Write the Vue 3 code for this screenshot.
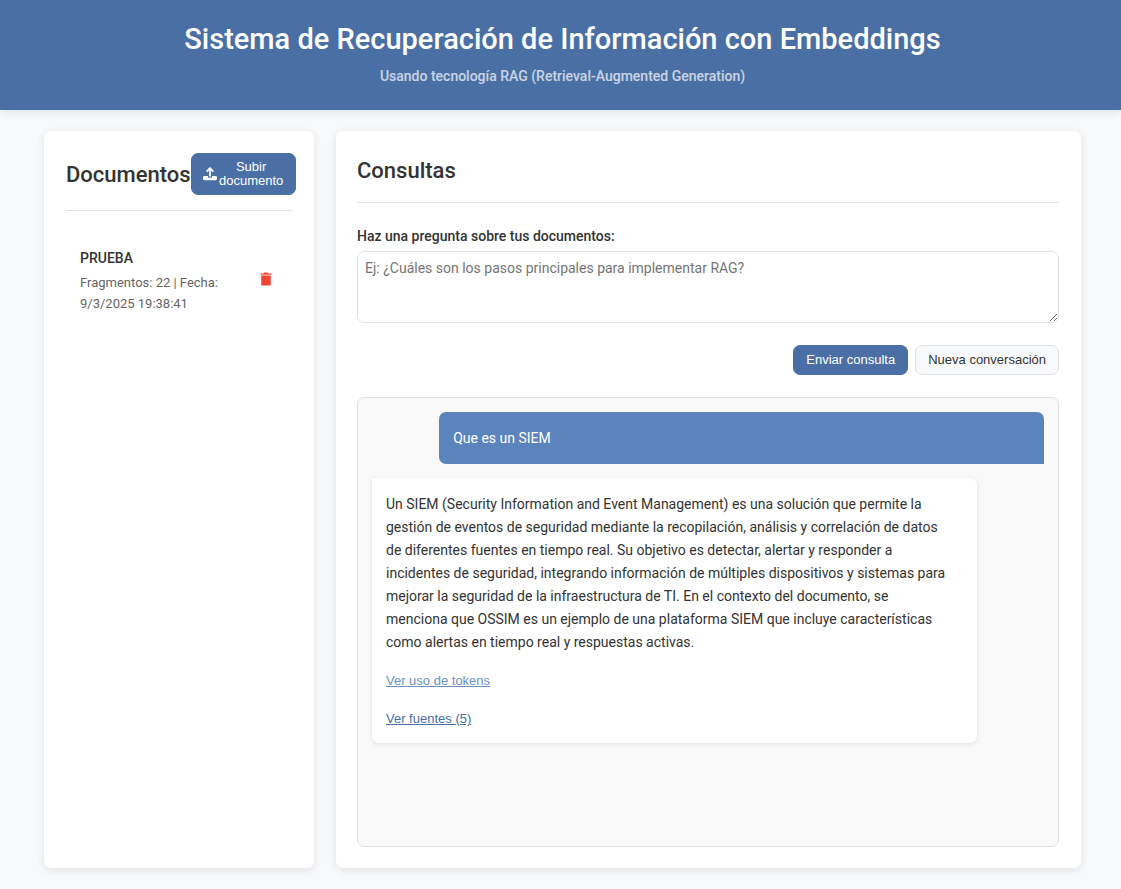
<script setup>
import { ref } from 'vue'

const question = ref('')
const documents = ref([
  { id: 1, name: 'PRUEBA', fragments: 22, date: '9/3/2025 19:38:41' },
])
const messages = ref([
  { id: 1, role: 'user', text: 'Que es un SIEM' },
  {
    id: 2,
    role: 'bot',
    text: 'Un SIEM (Security Information and Event Management) es una solución que permite la gestión de eventos de seguridad mediante la recopilación, análisis y correlación de datos de diferentes fuentes en tiempo real. Su objetivo es detectar, alertar y responder a incidentes de seguridad, integrando información de múltiples dispositivos y sistemas para mejorar la seguridad de la infraestructura de TI. En el contexto del documento, se menciona que OSSIM es un ejemplo de una plataforma SIEM que incluye características como alertas en tiempo real y respuestas activas.',
    sources: 5,
  },
])

function removeDocument(id) {
  documents.value = documents.value.filter((d) => d.id !== id)
}
function send() {
  const text = question.value.trim()
  if (!text) return
  messages.value.push({ id: Date.now(), role: 'user', text })
  question.value = ''
}
function reset() {
  messages.value = []
}
</script>

<template>
  <div class="page">
    <header class="header">
      <h1>Sistema de Recuperación de Información con Embeddings</h1>
      <p>Usando tecnología RAG (Retrieval-Augmented Generation)</p>
    </header>

    <main class="layout">
      <aside class="card">
        <div class="card-head docs-head">
          <h2>Documentos</h2>
          <button type="button" class="btn primary upload">
            <svg viewBox="0 0 14 14" width="14" height="14" aria-hidden="true">
              <path d="M7 9.6V2M3.6 4.6 7 1.2l3.4 3.4" fill="none" stroke="currentColor" stroke-width="1.8" />
              <path d="M1.4 9H5v.8c0 .6.4 1 1 1h2c.6 0 1-.4 1-1V9h3.6c.8 0 1.4.6 1.4 1.4v1.4c0 .8-.6 1.4-1.4 1.4H1.4C.6 13.2 0 12.6 0 11.8v-1.4C0 9.6.6 9 1.4 9Z" fill="currentColor" />
            </svg>
            <span>Subir documento</span>
          </button>
        </div>
        <ul class="docs">
          <li v-for="doc in documents" :key="doc.id" class="doc">
            <div class="doc-info">
              <h3>{{ doc.name }}</h3>
              <p>Fragmentos: {{ doc.fragments }} | Fecha: {{ doc.date }}</p>
            </div>
            <button type="button" class="delete" aria-label="Eliminar documento" @click="removeDocument(doc.id)">
              <svg viewBox="0 0 12 14" width="12" height="14" aria-hidden="true">
                <path d="M.5 1.4h3L4.2.4h3.6l.7 1h3v1.3H.5ZM1.2 3.6h9.6v8.6c0 .8-.6 1.4-1.4 1.4H2.6c-.8 0-1.4-.6-1.4-1.4Z" fill="currentColor" />
              </svg>
            </button>
          </li>
        </ul>
      </aside>

      <section class="card queries">
        <div class="card-head">
          <h2>Consultas</h2>
        </div>
        <form class="ask" @submit.prevent="send">
          <label for="question">Haz una pregunta sobre tus documentos:</label>
          <textarea
            id="question"
            v-model="question"
            placeholder="Ej: ¿Cuáles son los pasos principales para implementar RAG?"
          ></textarea>
          <div class="actions">
            <button type="submit" class="btn primary">Enviar consulta</button>
            <button type="button" class="btn secondary" @click="reset">Nueva conversación</button>
          </div>
        </form>
        <div class="chat">
          <article v-for="m in messages" :key="m.id" class="message" :class="m.role">
            <p>{{ m.text }}</p>
            <template v-if="m.role === 'bot'">
              <button type="button" class="toggle light">Ver uso de tokens</button>
              <button type="button" class="toggle">Ver fuentes ({{ m.sources }})</button>
            </template>
          </article>
        </div>
      </section>
    </main>
  </div>
</template>

<style>
body {
  margin: 0;
  background: #f8f9fb;
}
</style>

<style scoped>
* {
  box-sizing: border-box;
}
.page {
  min-height: 100vh;
  display: flex;
  flex-direction: column;
  font-family: Roboto, "Liberation Sans", sans-serif;
  font-size: 14px;
  line-height: 23px;
  color: #333;
  background: #f8f9fb;
}
h1, h2, h3, p, ul {
  margin: 0;
  padding: 0;
  font-weight: 500;
}
.header {
  padding: 16px 20px 22px 24px;
  text-align: center;
  color: #fff;
  background: #4a6fa5;
  box-shadow: 0 2px 9px rgba(0, 0, 0, 0.1);
}
.header h1 {
  font-size: 29px;
  line-height: 46px;
}
.header p {
  margin-top: 3px;
  opacity: 0.7;
}
.layout {
  flex: 1;
  display: grid;
  grid-template-columns: 270px minmax(0, 1fr);
  gap: 22px;
  padding: 21px 40px 21px 44px;
}
.card {
  padding: 22px 22px 21px 21px;
  background: #fff;
  border-radius: 7px;
  box-shadow: 0 2px 9px rgba(0, 0, 0, 0.1);
}
.card:first-child {
  padding: 22px 21px 21px 22px;
}
.card-head {
  padding-bottom: 14px;
  border-bottom: 1px solid #e0e0e0;
}
.card-head h2 {
  font-size: 22px;
  line-height: 35px;
}
.docs-head {
  display: flex;
  align-items: center;
  justify-content: space-between;
  padding-bottom: 15px;
}
.btn {
  padding: 7px 12px;
  border: 1px solid #4a6fa5;
  border-radius: 7px;
  font: 13px/14px "Liberation Sans", Arial, sans-serif;
  cursor: pointer;
}
.primary {
  color: #fff;
  background: #4a6fa5;
}
.secondary {
  color: #333;
  background: #f8f9fb;
  border-color: #e0e0e0;
}
.upload {
  display: flex;
  flex: none;
  align-items: center;
  gap: 2px;
  width: 105px;
  padding: 6px 11px;
}
.upload svg {
  flex: none;
}
.docs {
  padding-top: 22px;
  list-style: none;
}
.doc {
  display: flex;
  align-items: center;
  justify-content: space-between;
  padding: 14px;
}
.doc-info {
  width: 150px;
}
.doc h3 {
  font-size: 14px;
  line-height: 23px;
}
.doc p {
  margin-top: 2px;
  font-size: 13px;
  font-weight: 400;
  line-height: 21px;
  color: #666;
}
.delete {
  display: flex;
  padding: 5px 7px 9px;
  border: 0;
  color: #f44336;
  background: none;
  cursor: pointer;
}
.queries {
  display: flex;
  flex-direction: column;
}
.ask {
  display: flex;
  flex-direction: column;
  padding-top: 22px;
}
.ask label {
  margin-bottom: 3px;
  font-weight: 500;
}
textarea {
  display: block;
  width: 100%;
  height: 72px;
  padding: 7px;
  border: 1px solid #e0e0e0;
  border-radius: 7px;
  font: 14px/19px Roboto, "Liberation Sans", sans-serif;
  color: #333;
  background: #fff;
  resize: vertical;
}
.actions {
  display: flex;
  justify-content: flex-end;
  gap: 7px;
  margin: 22px 0;
}
.chat {
  flex: 1;
  display: flex;
  flex-direction: column;
  gap: 14px;
  padding: 14px;
  border: 1px solid #e0e0e0;
  border-radius: 7px;
  background: #f9f9f9;
}
.message {
  display: flex;
  flex-direction: column;
  align-items: flex-start;
  width: 90%;
  padding: 14px;
  border-radius: 7px;
}
.message p {
  font-weight: 400;
}
.user {
  align-self: flex-end;
  line-height: 24px;
  color: #fff;
  background: #5c84bc;
  border-bottom-right-radius: 0;
}
.bot {
  padding: 15px 25px 13px 14px;
  background: #fff;
  border-top-left-radius: 0;
  box-shadow: 0 1px 5px rgba(0, 0, 0, 0.1);
}
.toggle {
  margin-top: 15px;
  padding: 0;
  border: 0;
  font: 13px/23px "Liberation Sans", Arial, sans-serif;
  color: #4a6fa5;
  text-decoration: underline;
  background: none;
  cursor: pointer;
}
.light {
  color: #6b8fc4;
}
</style>
